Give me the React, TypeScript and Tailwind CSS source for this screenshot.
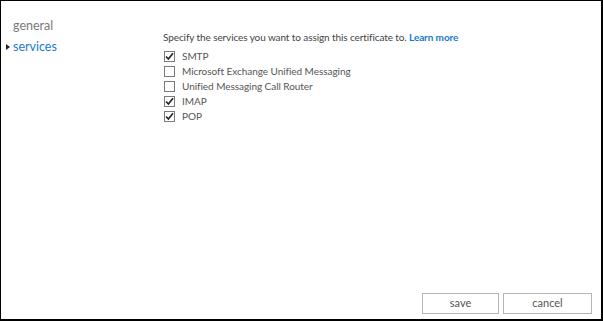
import React from "react";

const items = [
  { label: "SMTP", checked: true },
  { label: "Microsoft Exchange Unified Messaging", checked: false },
  { label: "Unified Messaging Call Router", checked: false },
  { label: "IMAP", checked: true },
  { label: "POP", checked: true },
];

function Box({ checked }: { checked: boolean }) {
  return (
    <span className="w-[11px] h-[11px] border border-[#7a7a7a] bg-white flex items-center justify-center shrink-0">
      {checked && (
        <svg width="9" height="9" viewBox="0 0 9 9">
          <path d="M1 4.5 L3.4 7 L8 1.2" fill="none" stroke="#222" strokeWidth="1.6" />
        </svg>
      )}
    </span>
  );
}

export default function App() {
  return (
    <div
      className="w-[603px] h-[321px] bg-white border-t border-l border-r-2 border-b-2 border-black flex box-border"
      style={{ fontFamily: 'Lato, "Open Sans", sans-serif' }}
    >
      <div className="w-[162px] shrink-0 pt-[16px] flex flex-col">
        <div className="pl-[12px] text-[12.5px] leading-[18px] text-[#7a7a7a]">general</div>
        <div className="flex items-center mt-[3px]">
          <svg width="12" height="8" viewBox="0 0 12 8" className="ml-[3px] -mr-[3px]">
            <path d="M2 1 L6 4 L2 7 Z" fill="#222" />
          </svg>
          <span className="text-[12.5px] leading-[18px] text-[#1a7ad1]">services</span>
        </div>
      </div>
      <div className="flex-1 flex flex-col">
        <div className="pt-[29px] text-[10px] leading-[15px] tracking-[-0.1px] text-[#444]">
          Specify the services you want to assign this certificate to.{" "}
          <span className="text-[#1a7ad1] font-bold">Learn more</span>
        </div>
        <div className="flex flex-col mt-[4px]">
          {items.map((it) => (
            <label key={it.label} className="flex items-center h-[15px] pl-[1px] gap-[7px]">
              <Box checked={it.checked} />
              <span className="text-[10px] tracking-[-0.05px] text-[#555] leading-[15px]">{it.label}</span>
            </label>
          ))}
        </div>
        <div className="flex-1" />
        <div className="flex justify-end gap-[4px] pr-[9px] pb-[5px]">
          <button className="w-[77px] h-[21px] border border-[#b5b5b5] bg-white text-[11px] text-[#555]">save</button>
          <button className="w-[89px] h-[21px] border border-[#b5b5b5] bg-white text-[11px] text-[#555]">cancel</button>
        </div>
      </div>
    </div>
  );
}
